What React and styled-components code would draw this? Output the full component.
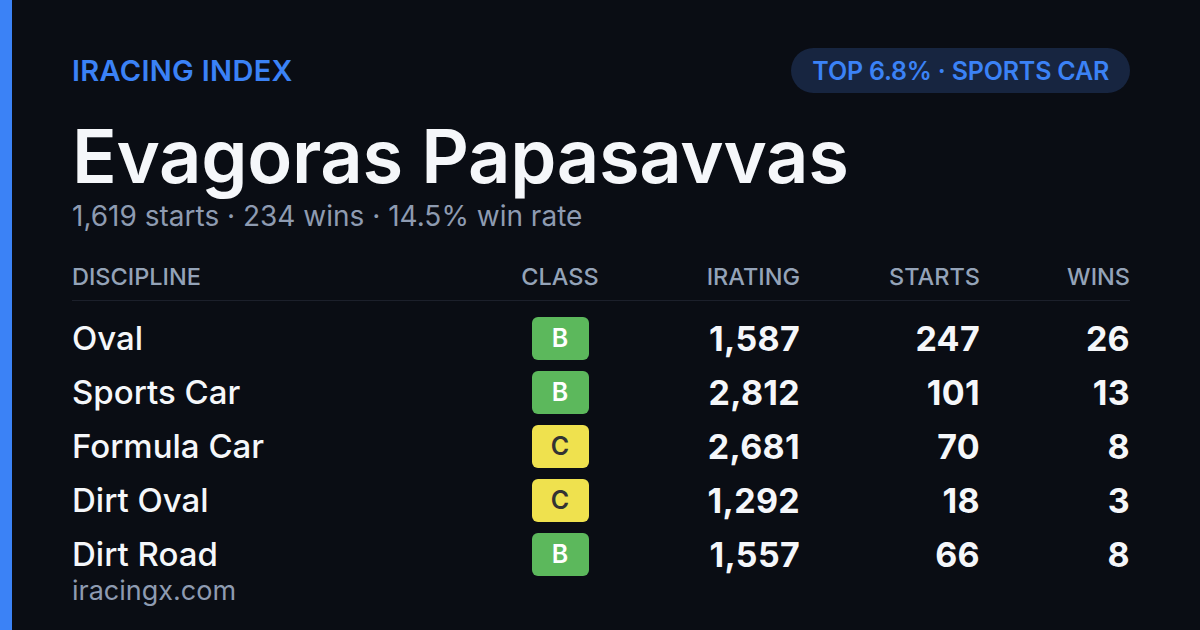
import React from "react";
import styled, { createGlobalStyle } from "styled-components";

const Global = createGlobalStyle`
  html, body {
    margin: 0;
    padding: 0;
    background: #0a0d14;
  }
  * { box-sizing: border-box; }
`;

const Card = styled.div`
  width: 1200px;
  height: 630px;
  background: #0a0d14;
  border-left: 12px solid #3b82f6;
  padding: 48px 70px 0 60px;
  display: flex;
  flex-direction: column;
  font-family: Inter, "Noto Sans", sans-serif;
  color: #f5f7fa;
  overflow: hidden;
`;

const TopBar = styled.div`
  display: flex;
  justify-content: space-between;
  align-items: center;
  height: 45px;
`;

const Brand = styled.div`
  font-size: 29px;
  font-weight: 600;
  color: #3b82f6;
  letter-spacing: 0.3px;
`;

const Pill = styled.div`
  height: 45px;
  padding: 0 21px;
  border-radius: 23px;
  background: #172540;
  color: #3b82f6;
  font-size: 25px;
  font-weight: 600;
  letter-spacing: -0.2px;
  display: flex;
  align-items: center;
`;

const Name = styled.h1`
  margin: 23px 0 0;
  font-size: 74px;
  line-height: 80px;
  font-weight: 600;
  letter-spacing: -0.3px;
`;

const Stats = styled.div`
  font-size: 28px;
  line-height: 30px;
  color: #8e9bb1;
  margin-top: 5px;
`;

const Table = styled.div`
  margin-top: 31px;
  display: grid;
  grid-template-columns: 1fr 120px 180px 180px 150px;
`;

const Head = styled.div`
  font-size: 23.5px;
  font-weight: 500;
  color: #94a3b8;
  height: 39px;
  line-height: 30px;
  border-bottom: 1px solid #1c202b;
  text-align: ${(p) => p.$align || "left"};
  margin-bottom: 10px;
`;

const Cell = styled.div`
  height: 54px;
  display: flex;
  align-items: center;
  justify-content: ${(p) =>
    p.$align === "right" ? "flex-end" : p.$align === "center" ? "center" : "flex-start"};
  font-size: ${(p) => (p.$bold ? "34px" : "33px")};
  font-weight: ${(p) => (p.$bold ? 700 : 500)};
  letter-spacing: ${(p) => (p.$bold ? "0.3px" : "0")};
`;

const Grade = styled.div`
  width: 57px;
  height: 43px;
  border-radius: 6px;
  display: flex;
  align-items: center;
  justify-content: center;
  font-size: 25px;
  font-weight: 600;
  letter-spacing: 0;
  background: ${(p) => (p.$grade === "B" ? "#5cb85c" : "#efe14e")};
  color: ${(p) => (p.$grade === "B" ? "#ffffff" : "#333333")};
`;

const Footer = styled.div`
  font-size: 27px;
  line-height: 30px;
  color: #8e9bb1;
  margin-top: -5px;
`;

const rows = [
  { name: "Oval", grade: "B", irating: "1,587", starts: 247, wins: 26 },
  { name: "Sports Car", grade: "B", irating: "2,812", starts: 101, wins: 13 },
  { name: "Formula Car", grade: "C", irating: "2,681", starts: 70, wins: 8 },
  { name: "Dirt Oval", grade: "C", irating: "1,292", starts: 18, wins: 3 },
  { name: "Dirt Road", grade: "B", irating: "1,557", starts: 66, wins: 8 },
];

export default function App() {
  return (
    <>
      <Global />
      <Card>
        <TopBar>
          <Brand>IRACING INDEX</Brand>
          <Pill>TOP 6.8% · SPORTS CAR</Pill>
        </TopBar>
        <Name>Evagoras Papasavvas</Name>
        <Stats>1,619 starts · 234 wins · 14.5% win rate</Stats>
        <Table>
          <Head>DISCIPLINE</Head>
          <Head $align="center">CLASS</Head>
          <Head $align="right">IRATING</Head>
          <Head $align="right">STARTS</Head>
          <Head $align="right">WINS</Head>
          {rows.map((r) => (
            <React.Fragment key={r.name}>
              <Cell>{r.name}</Cell>
              <Cell $align="center">
                <Grade $grade={r.grade}>{r.grade}</Grade>
              </Cell>
              <Cell $align="right" $bold>{r.irating}</Cell>
              <Cell $align="right" $bold>{r.starts}</Cell>
              <Cell $align="right" $bold>{r.wins}</Cell>
            </React.Fragment>
          ))}
        </Table>
        <Footer>iracingx.com</Footer>
      </Card>
    </>
  );
}
